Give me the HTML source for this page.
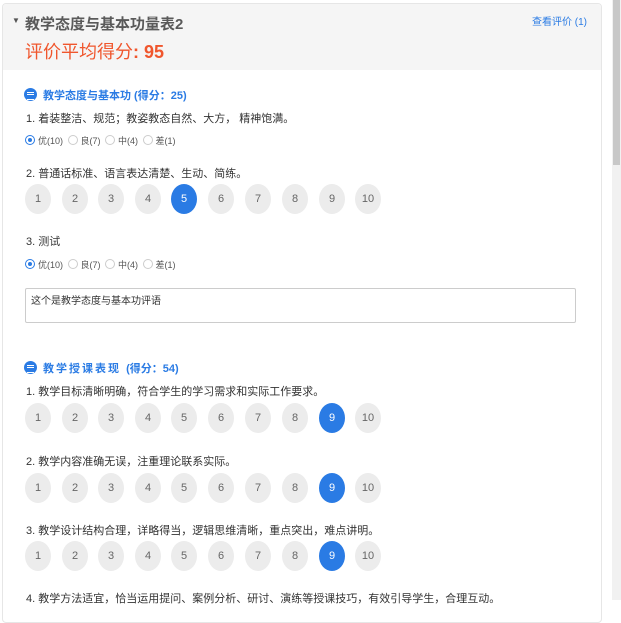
<!DOCTYPE html>
<html><head><meta charset="utf-8"><style>
*{margin:0;padding:0;box-sizing:border-box}
body{width:621px;height:600px;overflow:hidden;background:#fff;font-family:"Liberation Sans","Noto Sans CJK SC",sans-serif;position:relative;color:#333}
.card{position:absolute;left:2px;top:3px;width:600px;height:620px;border:1px solid #e6e6e6;border-radius:4px;background:#fff}
.head{position:absolute;left:0;top:0;right:0;height:66px;background:#f5f5f5;border-radius:4px 4px 0 0}
.a{position:absolute;white-space:nowrap}
.sb{position:absolute;left:612px;top:0;width:9px;height:600px;background:#f1f1f1}
.th{position:absolute;left:613px;top:0;width:7px;height:165px;background:#c8c8c8}
.q{font-size:11px;color:#333}
.sec{font-size:11px;font-weight:bold;color:#2a7be4}
.ic{position:absolute;width:13px;height:13px;border-radius:50%;background:#2a7be4}
.ic:before{content:"";position:absolute;left:3px;top:3.5px;width:7px;height:6px;border-top:1px solid #fff;border-bottom:1px solid #fff}
.ic:after{content:"";position:absolute;left:3px;top:6px;width:7px;height:1px;background:#fff}
.row{position:absolute;left:25px;height:30px}
.c{position:absolute;top:0;width:26px;height:30px;border-radius:50%;background:#ececec;font-size:11px;color:#666;text-align:center;line-height:30px}
.c.on{background:#2a7be4;color:#fff}
.r{position:absolute;font-size:9px;color:#555;line-height:10px}
.r i{display:inline-block;width:10px;height:10px;border:1px solid #ccc;border-radius:50%;vertical-align:-1px;margin-right:3px;position:relative}
.r i.on{border-color:#2a7be4}
.r i.on:after{content:"";position:absolute;left:2px;top:2px;width:4px;height:4px;border-radius:50%;background:#2a7be4}
</style></head><body>
<div class="card"><div class="head"></div></div>
<div class="a" style="left:12px;top:16px;font-size:8px;color:#555">▼</div>
<div class="a" style="left:25px;top:13px;font-size:15px;font-weight:bold;color:#5a5a5a">教学态度与基本功量表2</div>
<div class="a" style="left:532px;top:13px;font-size:10px;color:#2a7be4">查看评价 (1)</div>
<div class="a" style="left:25px;top:38px;font-size:18px;color:#f0562d">评价平均得分<b>: 95</b></div>

<div class="ic" style="left:24px;top:88px"></div>
<div class="a sec" style="left:43px;top:87px">教学态度与基本功 (得分：25)</div>
<div class="a q" style="left:26px;top:110px">1. 着装整洁、规范；教姿教态自然、大方， 精神饱满。</div>
<div class="r" style="left:25px;top:135px"><i class="on"></i>优(10) <i style="margin-left:2px"></i>良(7) <i style="margin-left:2px"></i>中(4) <i style="margin-left:2px"></i>差(1)</div>
<div class="a q" style="left:26px;top:165px">2. 普通话标准、语言表达清楚、生动、简练。</div>
<div class="row" style="top:184px"><div class="c" style="left:0">1</div><div class="c" style="left:37px">2</div><div class="c" style="left:73px">3</div><div class="c" style="left:110px">4</div><div class="c on" style="left:146px">5</div><div class="c" style="left:183px">6</div><div class="c" style="left:220px">7</div><div class="c" style="left:257px">8</div><div class="c" style="left:294px">9</div><div class="c" style="left:330px">10</div></div>
<div class="a q" style="left:26px;top:233px">3. 测试</div>
<div class="r" style="left:25px;top:259px"><i class="on"></i>优(10) <i style="margin-left:2px"></i>良(7) <i style="margin-left:2px"></i>中(4) <i style="margin-left:2px"></i>差(1)</div>
<div class="a" style="left:25px;top:288px;width:551px;height:35px;border:1px solid #ccc;border-radius:2px;font-size:10px;padding:3px 5px;color:#333">这个是教学态度与基本功评语</div>

<div class="ic" style="left:24px;top:361px"></div>
<div class="a sec" style="left:43px;top:360px;letter-spacing:2px">教学授课表现 <span style="letter-spacing:0">(得分：54)</span></div>
<div class="a q" style="left:26px;top:383px">1. 教学目标清晰明确，符合学生的学习需求和实际工作要求。</div>
<div class="row" style="top:403px"><div class="c" style="left:0">1</div><div class="c" style="left:37px">2</div><div class="c" style="left:73px">3</div><div class="c" style="left:110px">4</div><div class="c" style="left:146px">5</div><div class="c" style="left:183px">6</div><div class="c" style="left:220px">7</div><div class="c" style="left:257px">8</div><div class="c on" style="left:294px">9</div><div class="c" style="left:330px">10</div></div>
<div class="a q" style="left:26px;top:453px">2. 教学内容准确无误，注重理论联系实际。</div>
<div class="row" style="top:473px"><div class="c" style="left:0">1</div><div class="c" style="left:37px">2</div><div class="c" style="left:73px">3</div><div class="c" style="left:110px">4</div><div class="c" style="left:146px">5</div><div class="c" style="left:183px">6</div><div class="c" style="left:220px">7</div><div class="c" style="left:257px">8</div><div class="c on" style="left:294px">9</div><div class="c" style="left:330px">10</div></div>
<div class="a q" style="left:26px;top:522px">3. 教学设计结构合理，详略得当，逻辑思维清晰，重点突出，难点讲明。</div>
<div class="row" style="top:541px"><div class="c" style="left:0">1</div><div class="c" style="left:37px">2</div><div class="c" style="left:73px">3</div><div class="c" style="left:110px">4</div><div class="c" style="left:146px">5</div><div class="c" style="left:183px">6</div><div class="c" style="left:220px">7</div><div class="c" style="left:257px">8</div><div class="c on" style="left:294px">9</div><div class="c" style="left:330px">10</div></div>
<div class="a q" style="left:26px;top:590px">4. 教学方法适宜，恰当运用提问、案例分析、研讨、演练等授课技巧，有效引导学生，合理互动。</div>
<div class="sb"></div><div class="th"></div>
</body></html>
